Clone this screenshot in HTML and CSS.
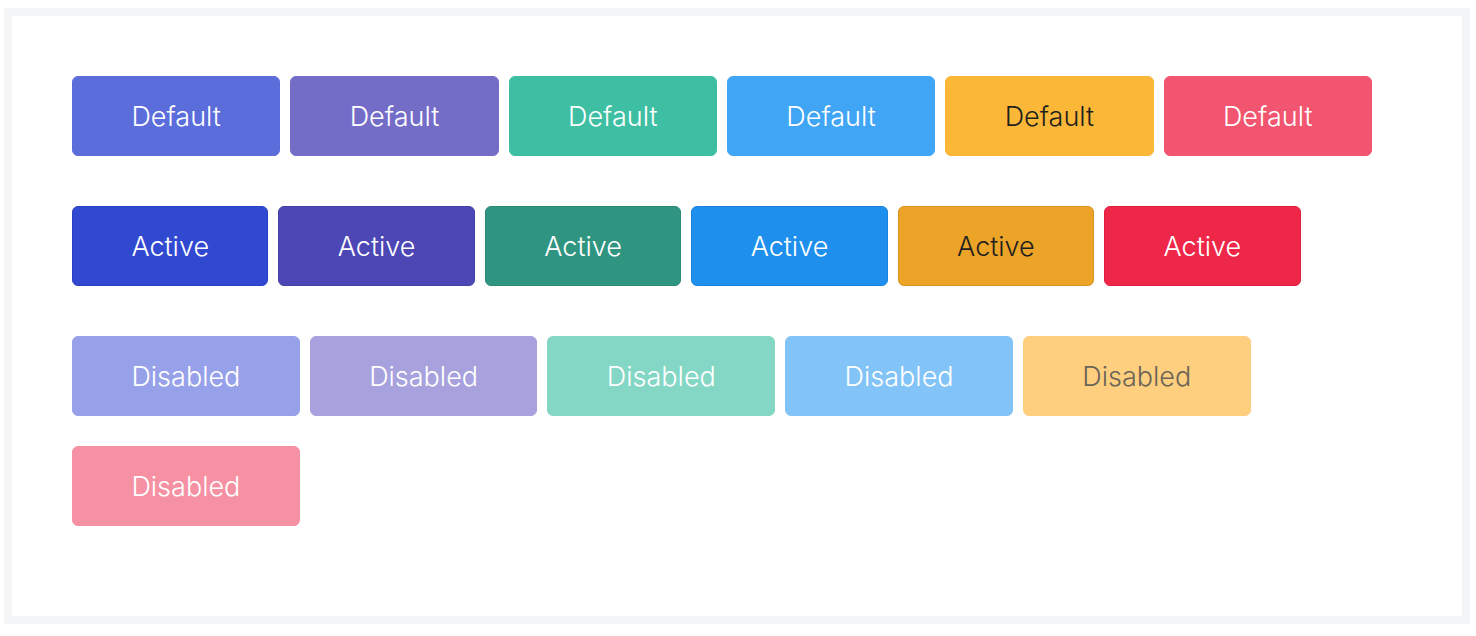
FILE: index.html
```html
<!DOCTYPE html>
<html lang="en">
<head>
<meta charset="utf-8">
<title>Buttons</title>
<link rel="stylesheet" href="styles.css">
</head>
<body>
<div class="frame">
  <div class="panel">
    <div class="group">
      <button class="btn primary">Default</button>
      <button class="btn secondary">Default</button>
      <button class="btn success">Default</button>
      <button class="btn info">Default</button>
      <button class="btn warning">Default</button>
      <button class="btn danger">Default</button>
    </div>
    <div class="group">
      <button class="btn primary active">Active</button>
      <button class="btn secondary active">Active</button>
      <button class="btn success active">Active</button>
      <button class="btn info active">Active</button>
      <button class="btn warning active">Active</button>
      <button class="btn danger active">Active</button>
    </div>
    <div class="group last">
      <button class="btn primary" disabled>Disabled</button>
      <button class="btn secondary" disabled>Disabled</button>
      <button class="btn success" disabled>Disabled</button>
      <button class="btn info" disabled>Disabled</button>
      <button class="btn warning" disabled>Disabled</button>
      <button class="btn danger" disabled>Disabled</button>
    </div>
  </div>
</div>
</body>
</html>
```

FILE: styles.css
```css
html, body {
  margin: 0;
  padding: 0;
  background: #fff;
}
body {
  padding: 8px 6px 0 4px;
  font-family: Inter, "Liberation Sans", "Noto Sans CJK SC", sans-serif;
}
.frame {
  background: #f4f5f7;
  padding: 8px;
}
.panel {
  background: #fff;
  padding: 60px;
}
.group {
  display: flex;
  flex-wrap: wrap;
  column-gap: 10px;
  margin-bottom: 20px;
}
.group.last {
  margin-bottom: 0;
}
.btn {
  box-sizing: border-box;
  height: 80px;
  padding: 0 58.4px;
  margin: 0 0 30px 0;
  border: 1px solid transparent;
  border-radius: 6px;
  font-family: inherit;
  font-size: 27px;
  font-weight: 300;
  line-height: 1;
  color: #fff;
  cursor: pointer;
}
.primary { background: #5b6cdb; border-color: #5b6cdb; }
.secondary { background: #746dc8; border-color: #746dc8; }
.success { background: #3ebfa3; border-color: #3ebfa3; }
.info { background: #40a5f4; border-color: #40a5f4; }
.warning { background: #fbb838; border-color: #fbb838; color: #1f1f1f; }
.danger { background: #f2556f; border-color: #f2556f; }

.primary.active { background: #3149d1; border-color: #2b41c4; }
.secondary.active { background: #4c47b5; border-color: #4540a8; }
.success.active { background: #2f9580; border-color: #2a8a76; }
.info.active { background: #1e8fec; border-color: #1a84dc; }
.warning.active { background: #eba328; border-color: #d9951f; }
.danger.active { background: #ee2749; border-color: #e01e40; }

.primary[disabled] { background: #96a1e9; border-color: #96a1e9; }
.secondary[disabled] { background: #a7a1dd; border-color: #a7a1dd; }
.success[disabled] { background: #83d7c4; border-color: #83d7c4; }
.info[disabled] { background: #82c4f8; border-color: #82c4f8; }
.warning[disabled] { background: #fdcf7e; border-color: #fdcf7e; color: #6b6457; }
.danger[disabled] { background: #f591a2; border-color: #f591a2; }
.btn[disabled] { cursor: default; }
```
